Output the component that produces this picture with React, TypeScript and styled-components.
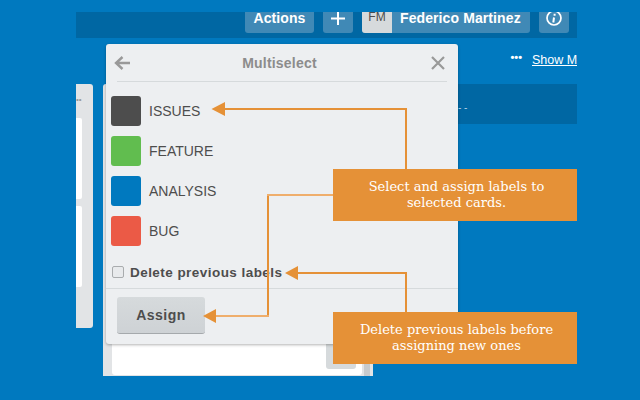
import React from 'react';
import styled, { createGlobalStyle } from 'styled-components';

const Global = createGlobalStyle`
  html, body { margin: 0; padding: 0; background: #0079bf; }
  * { box-sizing: border-box; }
`;

const Page = styled.div`
  position: relative;
  width: 640px;
  height: 400px;
  overflow: hidden;
  background: #0079bf;
  font-family: "Liberation Sans", Arial, sans-serif;
`;

const Board = styled.div`
  width: 501px;
  height: 400px;
  margin-left: 76px;
  padding-top: 12px;
  overflow: hidden;
`;

const Header = styled.div`
  height: 26px;
  background: #0067a3;
  display: flex;
  align-items: flex-start;
  justify-content: flex-start;
  padding-left: 169px;
  gap: 9px;
`;

const HeadButton = styled.div<{ $w: number }>`
  flex: 0 0 ${p => p.$w}px;
  height: 21px;
  background: #4089b6;
  border-radius: 0 0 3px 3px;
  color: #fff;
  font-weight: 700;
  font-size: 14px;
  line-height: 12px;
  letter-spacing: 0.1px;
  display: flex;
  align-items: flex-start;
  justify-content: center;
  overflow: hidden;
  svg { display: block; }
`;

const UserButton = styled(HeadButton)`
  justify-content: flex-start;
  gap: 8px;
`;

const Avatar = styled.span`
  flex: 0 0 30px;
  height: 21px;
  background: #d6dadc;
  color: #4d4d4d;
  font-weight: 400;
  font-size: 12px;
  line-height: 11px;
  letter-spacing: 0;
  text-align: center;
`;

const SubHeader = styled.div`
  height: 46px;
  display: flex;
  justify-content: flex-end;
  align-items: flex-start;
  padding-top: 15px;
  gap: 10px;
  color: #fff;
  font-size: 12.5px;
  line-height: 15px;
  white-space: nowrap;
`;

const Dots = styled.span`
  font-weight: 700;
  font-size: 11px;
  line-height: 9px;
`;

const ShowMore = styled.span`
  display: block;
  width: 45px;
  overflow: hidden;
  text-decoration: underline;
`;

const Lists = styled.div`
  display: flex;
  align-items: flex-start;
  gap: 10px;
`;

const NarrowList = styled.div`
  flex: 0 0 17px;
  height: 244px;
  background: #e2e4e6;
  border-radius: 0 3px 3px 0;
  display: flex;
  flex-direction: column;
  gap: 7px;
`;

const ListMenu = styled.div`
  height: 27px;
  color: #999;
  font-size: 8px;
  line-height: 31px;
`;

const ClippedCard = styled.div`
  width: 6px;
  height: 81px;
  background: #fff;
  border-radius: 0 2px 2px 0;
`;

const WideList = styled.div`
  flex: 0 0 270px;
  height: 292px;
  background: #e2e4e6;
  border-radius: 3px 0 0 0;
  padding: 0 3px 1px 9px;
  display: flex;
  align-items: flex-end;
  gap: 2px;
`;

const BottomCard = styled.div`
  flex: 0 0 250px;
  height: 100px;
  background: #fff;
  border-radius: 3px;
  display: flex;
  justify-content: flex-end;
  align-items: flex-end;
  padding: 0 6px 6px 0;
`;

const MiniButton = styled.div`
  width: 30px;
  height: 40px;
  background: #d6dadc;
  border-radius: 3px;
`;

const Scrollbar = styled.div`
  flex: 0 0 6px;
  height: 100px;
  margin-bottom: -1px;
  background: #c6cacd;
`;

const Band = styled.div`
  flex: 1;
  height: 40px;
  margin-left: -10px;
  background: #0067a3;
  color: #b5d3e7;
  font-size: 10px;
  line-height: 48px;
  padding-left: 85px;
`;

const Popover = styled.div`
  position: absolute;
  left: 106px;
  top: 44px;
  width: 352px;
  height: 300px;
  background: #edeff1;
  border-radius: 3px;
  box-shadow: 0 1px 3px rgba(0, 0, 0, 0.3);
  display: flex;
  flex-direction: column;
`;

const PopHeader = styled.div`
  height: 38px;
  margin: 0 11px;
  border-bottom: 1px solid #d6dadc;
  display: flex;
  align-items: center;
  justify-content: space-between;
  color: #8c8c8c;
`;

const PopTitle = styled.div`
  font-weight: 700;
  font-size: 14px;
  letter-spacing: 0.2px;
  color: #8c8c8c;
  margin-right: 1px;
`;

const BackIcon = styled.svg`
  display: block;
  width: 18px;
  height: 18px;
  margin-left: -4px;
`;

const CloseIcon = styled.svg`
  display: block;
  width: 18px;
  height: 18px;
`;

const LabelList = styled.div`
  padding: 14px 0 0 5px;
  display: flex;
  flex-direction: column;
  gap: 10px;
`;

const LabelRow = styled.div`
  height: 30px;
  display: flex;
  align-items: center;
  gap: 8px;
  color: #4d4d4d;
  font-size: 14px;
`;

const Swatch = styled.span<{ $c: string }>`
  flex: 0 0 30px;
  height: 30px;
  border-radius: 3px;
  background: ${p => p.$c};
`;

const CheckRow = styled.div`
  height: 42px;
  padding: 19px 0 0 6px;
  display: flex;
  align-items: flex-start;
  gap: 6px;
  color: #4d4d4d;
  font-weight: 700;
  font-size: 13.5px;
  line-height: 15px;
  letter-spacing: 0.45px;
`;

const Check = styled.span`
  flex: 0 0 12px;
  height: 12px;
  margin-top: 1px;
  background: #e8eaec;
  border: 1px solid #a9acae;
  border-radius: 2px;
`;

const Footer = styled.div`
  flex: 1;
  border-top: 1px solid #d6dadc;
  padding: 8px 0 0 11px;
`;

const Assign = styled.div`
  width: 88px;
  height: 37px;
  border-radius: 3px;
  background: linear-gradient(#d6dadc, #ced2d5);
  border-bottom: 1px solid #a5a9ac;
  color: #4d4d4d;
  font-weight: 700;
  font-size: 14px;
  letter-spacing: 0.5px;
  display: flex;
  align-items: center;
  justify-content: center;
`;

const Callout = styled.div<{ $top: number }>`
  position: absolute;
  left: 333px;
  top: ${p => p.$top}px;
  width: 244px;
  height: 52px;
  background: #e59137;
  color: #fff;
  font-family: "DejaVu Serif", "Liberation Serif", serif;
  font-size: 13px;
  line-height: 16px;
  text-align: center;
  padding: 10px 0 0 3px;
`;

const Arrows = styled.svg`
  position: absolute;
  left: 0;
  top: 0;
  width: 640px;
  height: 400px;
  pointer-events: none;
`;

const labels = [
  { name: 'ISSUES', color: '#4d4d4d' },
  { name: 'FEATURE', color: '#61bd4f' },
  { name: 'ANALYSIS', color: '#0079bf' },
  { name: 'BUG', color: '#eb5a46' },
];

export default function App() {
  return (
    <Page>
      <Global />
      <Board>
        <Header>
          <HeadButton $w={69}>Actions</HeadButton>
          <HeadButton $w={30}>
            <svg width="16" height="14" viewBox="0 0 16 14">
              <path d="M8 0v13M1 6.5h14" stroke="#fff" strokeWidth="2" fill="none" />
            </svg>
          </HeadButton>
          <UserButton $w={168}>
            <Avatar>FM</Avatar>
            Federico Martinez
          </UserButton>
          <HeadButton $w={30}>
            <svg width="18" height="20" viewBox="0 0 18 20">
              <circle cx="9" cy="6" r="7" stroke="#fff" strokeWidth="1.7" fill="none" />
              <path d="M9.6 1.8v2M9 5.5l-.7 5" stroke="#fff" strokeWidth="2" fill="none" />
            </svg>
          </HeadButton>
          <HeadButton $w={30} />
        </Header>
        <SubHeader>
          <Dots>•••</Dots>
          <ShowMore>Show More</ShowMore>
        </SubHeader>
        <Lists>
          <NarrowList>
            <ListMenu>••</ListMenu>
            <ClippedCard />
            <ClippedCard />
          </NarrowList>
          <WideList>
            <BottomCard>
              <MiniButton />
            </BottomCard>
            <Scrollbar />
          </WideList>
          <Band>- -</Band>
        </Lists>
      </Board>
      <Popover>
        <PopHeader>
          <BackIcon viewBox="0 0 18 18">
            <path d="M17 9H3M9.5 3L3 9l6.5 6" stroke="#999" strokeWidth="2.4" fill="none" />
          </BackIcon>
          <PopTitle>Multiselect</PopTitle>
          <CloseIcon viewBox="0 0 18 18">
            <path d="M3 3l12 12M15 3L3 15" stroke="#999" strokeWidth="2.2" fill="none" />
          </CloseIcon>
        </PopHeader>
        <LabelList>
          {labels.map(l => (
            <LabelRow key={l.name}>
              <Swatch $c={l.color} />
              {l.name}
            </LabelRow>
          ))}
        </LabelList>
        <CheckRow>
          <Check />
          Delete previous labels
        </CheckRow>
        <Footer>
          <Assign>Assign</Assign>
        </Footer>
      </Popover>
      <Arrows viewBox="0 0 640 400">
        <g fill="none" strokeWidth="2">
          <path d="M406 170V109H224" stroke="#e59137" />
          <path d="M406 313V273H297" stroke="#e59137" />
          <path d="M268 196V315" stroke="#e59137" />
          <path d="M334 195H267M269 316H214" stroke="#efae6c" />
        </g>
        <path d="M211.5 109L225 102V116Z M203 316L216 309V323Z M285 273L298 266V280Z" fill="#e59137" />
      </Arrows>
      <Callout $top={169}>
        Select and assign labels to
        <br />
        selected cards.
      </Callout>
      <Callout $top={312}>
        Delete previous labels before
        <br />
        assigning new ones
      </Callout>
    </Page>
  );
}
